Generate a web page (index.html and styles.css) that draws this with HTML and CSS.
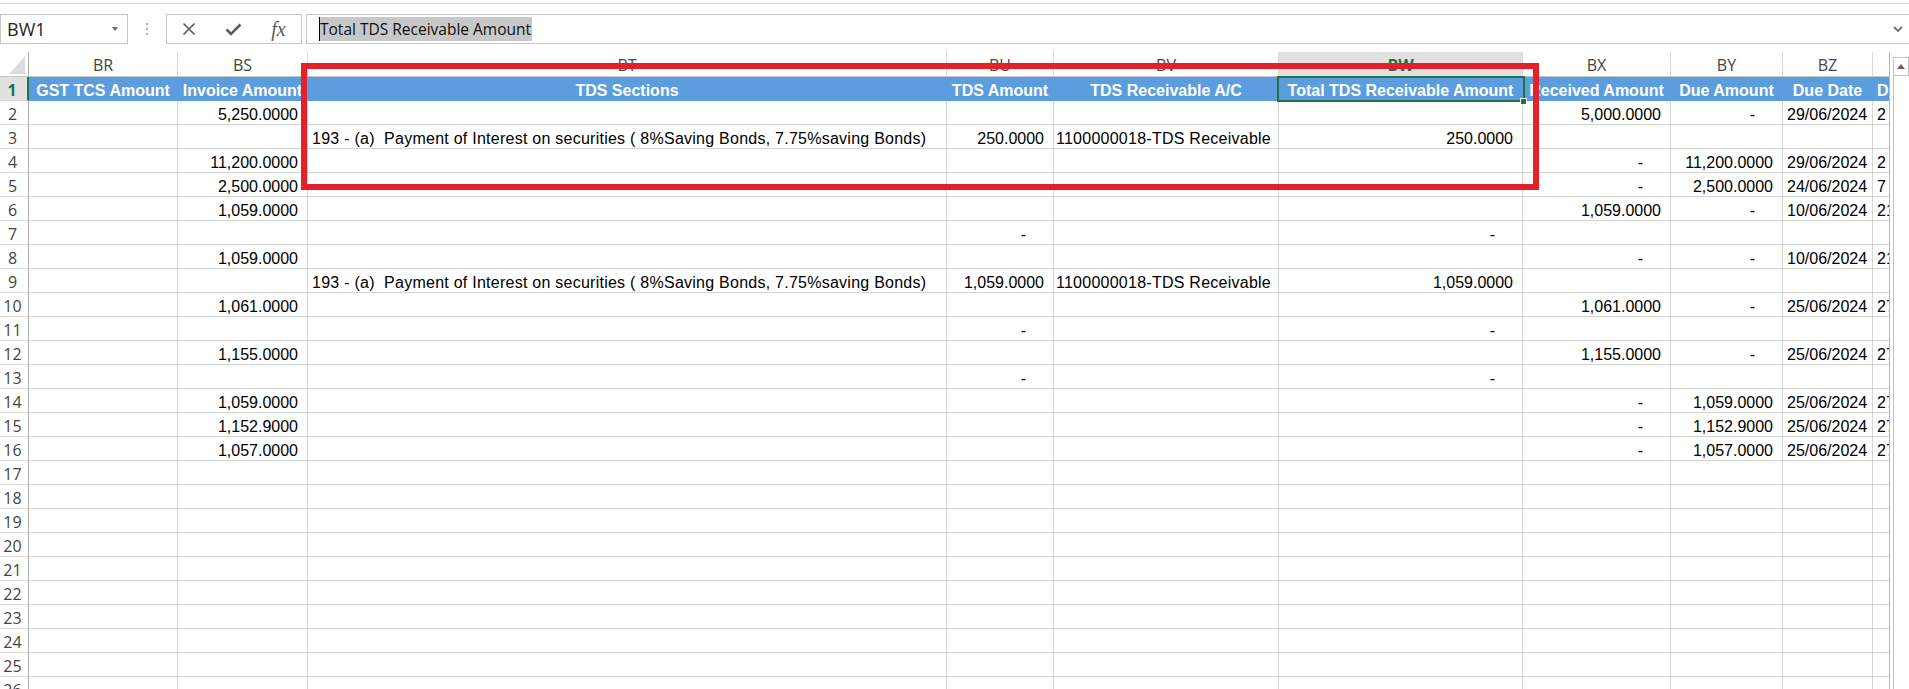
FILE: index.html
```html
<!DOCTYPE html>
<html>
<head>
<meta charset="utf-8">
<title>Sheet</title>
<link rel="stylesheet" href="styles.css">
</head>
<body>
<div class="app">
  <div class="ribbon-edge"></div>
  <div class="fbar">
    <div class="namebox"><span>BW1</span><span class="dd"></span></div>
    <div class="grip">
      <svg width="4" height="14" viewBox="0 0 4 14"><circle cx="2" cy="2" r="1.1" fill="#9a9a9a"/><circle cx="2" cy="7" r="1.1" fill="#9a9a9a"/><circle cx="2" cy="12" r="1.1" fill="#9a9a9a"/></svg>
    </div>
    <div class="fxbox">
      <svg width="14" height="14" viewBox="0 0 14 14"><path d="M1.5 1.5 L12.5 12.5 M12.5 1.5 L1.5 12.5" stroke="#5c5c5c" stroke-width="1.7" fill="none"/></svg>
      <svg width="17" height="13" viewBox="0 0 17 13"><path d="M1.5 6.5 L6 11 L15.5 1.5" stroke="#5c5c5c" stroke-width="2.6" fill="none"/></svg>
      <span class="fx">fx</span>
    </div>
    <div class="finput">
      <span class="sel">Total TDS Receivable Amount</span>
      <svg class="chev" width="10" height="6" viewBox="0 0 10 6"><path d="M1 1 L5 5 L9 1" stroke="#707070" stroke-width="1.8" fill="none"/></svg>
    </div>
  </div>

  <div class="main">
    <div class="sheet">
      <div class="r hr">
        <div class="corner"><span class="tri"></span></div>
        <div class="ch">BR</div><div class="ch">BS</div><div class="ch">BT</div><div class="ch">BU</div><div class="ch">BV</div><div class="ch act">BW</div><div class="ch">BX</div><div class="ch">BY</div><div class="ch">BZ</div><div class="ch"></div>
      </div>

      <div class="r r1">
        <div class="h act">1</div>
        <div class="c">GST TCS Amount</div><div class="c">Invoice Amount</div><div class="c">TDS Sections</div><div class="c">TDS Amount</div><div class="c">TDS Receivable A/C</div><div class="c">Total TDS Receivable Amount</div><div class="c">Received Amount</div><div class="c">Due Amount</div><div class="c">Due Date</div><div class="c lft">D</div>
      </div>

      <div class="r"><div class="h">2</div><div class="c"></div><div class="c n">5,250.0000</div><div class="c"></div><div class="c"></div><div class="c"></div><div class="c"></div><div class="c n">5,000.0000</div><div class="c d">-</div><div class="c dt">29/06/2024</div><div class="c">2</div></div>
      <div class="r"><div class="h">3</div><div class="c"></div><div class="c"></div><div class="c t">193 - (a)  Payment of Interest on securities ( 8%Saving Bonds, 7.75%saving Bonds)</div><div class="c n">250.0000</div><div class="c t tv">1100000018-TDS Receivable</div><div class="c n">250.0000</div><div class="c"></div><div class="c"></div><div class="c"></div><div class="c"></div></div>
      <div class="r"><div class="h">4</div><div class="c"></div><div class="c n">11,200.0000</div><div class="c"></div><div class="c"></div><div class="c"></div><div class="c"></div><div class="c d">-</div><div class="c n">11,200.0000</div><div class="c dt">29/06/2024</div><div class="c">2</div></div>
      <div class="r"><div class="h">5</div><div class="c"></div><div class="c n">2,500.0000</div><div class="c"></div><div class="c"></div><div class="c"></div><div class="c"></div><div class="c d">-</div><div class="c n">2,500.0000</div><div class="c dt">24/06/2024</div><div class="c">7</div></div>
      <div class="r"><div class="h">6</div><div class="c"></div><div class="c n">1,059.0000</div><div class="c"></div><div class="c"></div><div class="c"></div><div class="c"></div><div class="c n">1,059.0000</div><div class="c d">-</div><div class="c dt">10/06/2024</div><div class="c">21</div></div>
      <div class="r"><div class="h">7</div><div class="c"></div><div class="c"></div><div class="c"></div><div class="c d">-</div><div class="c"></div><div class="c d">-</div><div class="c"></div><div class="c"></div><div class="c"></div><div class="c"></div></div>
      <div class="r"><div class="h">8</div><div class="c"></div><div class="c n">1,059.0000</div><div class="c"></div><div class="c"></div><div class="c"></div><div class="c"></div><div class="c d">-</div><div class="c d">-</div><div class="c dt">10/06/2024</div><div class="c">21</div></div>
      <div class="r"><div class="h">9</div><div class="c"></div><div class="c"></div><div class="c t">193 - (a)  Payment of Interest on securities ( 8%Saving Bonds, 7.75%saving Bonds)</div><div class="c n">1,059.0000</div><div class="c t tv">1100000018-TDS Receivable</div><div class="c n">1,059.0000</div><div class="c"></div><div class="c"></div><div class="c"></div><div class="c"></div></div>
      <div class="r"><div class="h">10</div><div class="c"></div><div class="c n">1,061.0000</div><div class="c"></div><div class="c"></div><div class="c"></div><div class="c"></div><div class="c n">1,061.0000</div><div class="c d">-</div><div class="c dt">25/06/2024</div><div class="c">27</div></div>
      <div class="r"><div class="h">11</div><div class="c"></div><div class="c"></div><div class="c"></div><div class="c d">-</div><div class="c"></div><div class="c d">-</div><div class="c"></div><div class="c"></div><div class="c"></div><div class="c"></div></div>
      <div class="r"><div class="h">12</div><div class="c"></div><div class="c n">1,155.0000</div><div class="c"></div><div class="c"></div><div class="c"></div><div class="c"></div><div class="c n">1,155.0000</div><div class="c d">-</div><div class="c dt">25/06/2024</div><div class="c">27</div></div>
      <div class="r"><div class="h">13</div><div class="c"></div><div class="c"></div><div class="c"></div><div class="c d">-</div><div class="c"></div><div class="c d">-</div><div class="c"></div><div class="c"></div><div class="c"></div><div class="c"></div></div>
      <div class="r"><div class="h">14</div><div class="c"></div><div class="c n">1,059.0000</div><div class="c"></div><div class="c"></div><div class="c"></div><div class="c"></div><div class="c d">-</div><div class="c n">1,059.0000</div><div class="c dt">25/06/2024</div><div class="c">27</div></div>
      <div class="r"><div class="h">15</div><div class="c"></div><div class="c n">1,152.9000</div><div class="c"></div><div class="c"></div><div class="c"></div><div class="c"></div><div class="c d">-</div><div class="c n">1,152.9000</div><div class="c dt">25/06/2024</div><div class="c">27</div></div>
      <div class="r"><div class="h">16</div><div class="c"></div><div class="c n">1,057.0000</div><div class="c"></div><div class="c"></div><div class="c"></div><div class="c"></div><div class="c d">-</div><div class="c n">1,057.0000</div><div class="c dt">25/06/2024</div><div class="c">27</div></div>
      <div class="r"><div class="h">17</div><div class="c"></div><div class="c"></div><div class="c"></div><div class="c"></div><div class="c"></div><div class="c"></div><div class="c"></div><div class="c"></div><div class="c"></div><div class="c"></div></div>
      <div class="r"><div class="h">18</div><div class="c"></div><div class="c"></div><div class="c"></div><div class="c"></div><div class="c"></div><div class="c"></div><div class="c"></div><div class="c"></div><div class="c"></div><div class="c"></div></div>
      <div class="r"><div class="h">19</div><div class="c"></div><div class="c"></div><div class="c"></div><div class="c"></div><div class="c"></div><div class="c"></div><div class="c"></div><div class="c"></div><div class="c"></div><div class="c"></div></div>
      <div class="r"><div class="h">20</div><div class="c"></div><div class="c"></div><div class="c"></div><div class="c"></div><div class="c"></div><div class="c"></div><div class="c"></div><div class="c"></div><div class="c"></div><div class="c"></div></div>
      <div class="r"><div class="h">21</div><div class="c"></div><div class="c"></div><div class="c"></div><div class="c"></div><div class="c"></div><div class="c"></div><div class="c"></div><div class="c"></div><div class="c"></div><div class="c"></div></div>
      <div class="r"><div class="h">22</div><div class="c"></div><div class="c"></div><div class="c"></div><div class="c"></div><div class="c"></div><div class="c"></div><div class="c"></div><div class="c"></div><div class="c"></div><div class="c"></div></div>
      <div class="r"><div class="h">23</div><div class="c"></div><div class="c"></div><div class="c"></div><div class="c"></div><div class="c"></div><div class="c"></div><div class="c"></div><div class="c"></div><div class="c"></div><div class="c"></div></div>
      <div class="r"><div class="h">24</div><div class="c"></div><div class="c"></div><div class="c"></div><div class="c"></div><div class="c"></div><div class="c"></div><div class="c"></div><div class="c"></div><div class="c"></div><div class="c"></div></div>
      <div class="r"><div class="h">25</div><div class="c"></div><div class="c"></div><div class="c"></div><div class="c"></div><div class="c"></div><div class="c"></div><div class="c"></div><div class="c"></div><div class="c"></div><div class="c"></div></div>
      <div class="r"><div class="h">26</div><div class="c"></div><div class="c"></div><div class="c"></div><div class="c"></div><div class="c"></div><div class="c"></div><div class="c"></div><div class="c"></div><div class="c"></div><div class="c"></div></div>

      <div class="selbox"></div>
      <div class="handle"></div>
      <div class="redbox"></div>
    </div>
    <div class="vscroll"><div class="up"><span class="uptri"></span></div></div>
  </div>
</div>
</body>
</html>
```

FILE: styles.css
```css
* { box-sizing: border-box; }
html, body { margin: 0; padding: 0; background: #fff; overflow: hidden; }

.app {
  width: 1909px;
  height: 689px;
  overflow: hidden;
  position: relative;
  font-family: "Open Sans", "Noto Sans", sans-serif;
}

.ribbon-edge { height: 4px; border-bottom: 1px solid #d5d5d5; }

/* formula bar */
.fbar { display: flex; height: 30px; margin-top: 10px; }
.namebox {
  width: 128px;
  border: 1px solid #c6c6c6;
  display: flex;
  align-items: center;
  justify-content: space-between;
  padding: 0 9px 0 6px;
  font-size: 18px;
  color: #262626;
}
.dd {
  width: 0; height: 0;
  border-left: 3.5px solid transparent;
  border-right: 3.5px solid transparent;
  border-top: 4px solid #6d6d6d;
}
.grip { width: 38px; display: flex; align-items: center; justify-content: center; }
.fxbox {
  width: 136px;
  border: 1px solid #c6c6c6;
  display: grid;
  grid-template-columns: 44px 45px 45px;
  align-items: center;
  justify-items: center;
}
.fx {
  font-family: "Liberation Serif", "DejaVu Serif", serif;
  font-style: italic;
  font-size: 20px;
  line-height: 20px;
  color: #5a5a5a;
}
.finput {
  flex: 1;
  margin-left: 4px;
  margin-right: -4px;
  border: 1px solid #c6c6c6;
  display: flex;
  align-items: center;
  padding-left: 12px;
}
.sel {
  background: #c8c8c8;
  border-left: 1px solid #000;
  line-height: 24px;
  font-size: 15.5px;
  color: #111;
  padding-right: 1px;
}
.chev { margin-left: auto; margin-right: 9px; }

/* sheet */
.main { display: flex; margin-top: 8px; }
.sheet { position: relative; width: 1890px; border-right: 1px solid #b5b5b5; }

.r {
  display: grid;
  grid-template-columns: 29px 149px 130px 639px 107px 225px 244px 148px 112px 90px 16px;
  height: 24px;
}
.r > :last-child { border-right: none; }
.hr { height: 25px; }

.corner {
  border-right: 1px solid #ababab;
  border-bottom: 1px solid #c4c4c4;
  display: flex;
  align-items: flex-end;
  justify-content: flex-end;
  padding: 0 3px 2px 0;
}
.tri {
  width: 16px; height: 18px;
  background: #dcdcdc;
  clip-path: polygon(100% 0, 100% 100%, 0 100%);
}
.ch {
  border-right: 1px solid #dadada;
  border-bottom: 1px solid #c4c4c4;
  text-align: center;
  font-size: 16px;
  line-height: 21px;
  padding-top: 3px;
  color: #444;
}
.ch.act { background: #e1e1e1; color: #217346; font-weight: bold; }

.h {
  border-right: 1px solid #ababab;
  border-bottom: 1px solid #dadada;
  text-align: center;
  padding: 3px 3px 0 0;
  font-size: 16px;
  line-height: 20px;
  color: #444;
}
.h.act {
  background: #e1e1e1;
  color: #217346;
  font-weight: bold;
  border-right: 2px solid #217346;
}

.c {
  border-right: 1px solid #d4d4d4;
  border-bottom: 1px solid #d4d4d4;
  font-family: "Liberation Sans", Arial, sans-serif;
  font-size: 16px;
  line-height: 19px;
  padding: 4px 4px 0 4px;
  white-space: pre;
  overflow: hidden;
  color: #000;
}
.c.t { letter-spacing: 0.25px; }
.c.n { text-align: right; padding-right: 9px; }
.c.d { text-align: right; padding-right: 27px; }
.c.dt { text-align: right; padding-right: 5px; }
.c.tv { padding-left: 2px; }

.r1 .c {
  background: #5c9de0;
  border-color: #5c9de0;
  color: #fff;
  font-weight: bold;
  text-align: center;
  padding-left: 0;
  padding-right: 0;
}
.r1 .c.lft { text-align: left; padding-left: 4px; }

/* overlays */
.selbox {
  position: absolute;
  left: 1277px; top: 24px;
  width: 248px; height: 26px;
  border: 2px solid #217346;
}
.handle {
  position: absolute;
  left: 1520px; top: 46px;
  width: 7px; height: 7px;
  background: #217346;
  border: 1px solid #fff;
}
.redbox {
  position: absolute;
  left: 301px; top: 11px;
  width: 1238px; height: 127px;
  border: 6px solid #e3212a;
}

/* scrollbar */
.vscroll {
  width: 16px;
  margin-left: 3px;
  margin-top: 5px;
  border-left: 1px solid #c2c2c2;
}
.up {
  height: 19px;
  border: 1px solid #c2c2c2;
  border-left: none;
  display: flex;
  align-items: center;
  justify-content: center;
}
.uptri {
  width: 0; height: 0;
  border-left: 4px solid transparent;
  border-right: 4px solid transparent;
  border-bottom: 5px solid #606060;
}
```
